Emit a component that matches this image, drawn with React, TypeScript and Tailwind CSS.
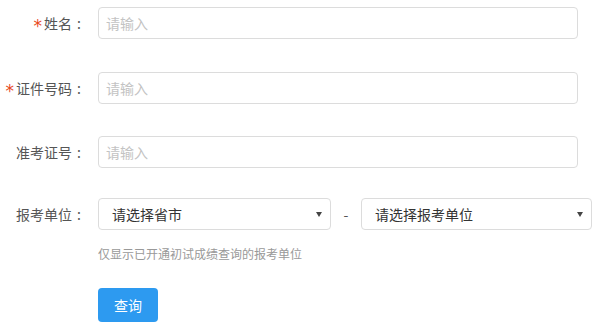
import React from 'react';

const font = { fontFamily: '"Microsoft YaHei", "Noto Sans CJK SC", "Noto Sans", sans-serif' };

function Label({ text, required }: { text: string; required?: boolean }) {
  return (
    <div className="flex w-[86px] shrink-0 items-center justify-end text-[14px] text-[#555]">
      {required && (
        <span className="mr-[2px] mt-[6px] text-[17px] leading-none text-[#e8491d]" style={{ fontFamily: '"DejaVu Sans", sans-serif' }}>
          *
        </span>
      )}
      {text}
      <span className="w-[14px] text-center">:</span>
    </div>
  );
}

function TextRow({ label, required, className }: { label: string; required?: boolean; className?: string }) {
  return (
    <div className={`flex items-center ${className ?? ''}`}>
      <Label text={label} required={required} />
      <input
        placeholder="请输入"
        className="ml-[12px] h-[32px] w-[480px] rounded-[4px] border border-[#dcdcdc] bg-white px-[7px] text-[14px] text-[#333] outline-none placeholder:text-[#c3c3c3]"
      />
    </div>
  );
}

function Select({ text, width }: { text: string; width: string }) {
  return (
    <div className={`relative flex h-[32px] items-center rounded-[4px] border border-[#dcdcdc] bg-white pl-[13px] text-[14px] text-[#333] ${width}`}>
      {text}
      <span className="absolute right-[8px] top-[13px] h-0 w-0 border-x-[3.5px] border-t-[5px] border-x-transparent border-t-[#444]" />
    </div>
  );
}

export default function App() {
  return (
    <div className="h-[326px] w-[598px] bg-white pt-[7px]" style={font}>
      <TextRow label="姓名" required />
      <TextRow label="证件号码" required className="mt-[33px]" />
      <TextRow label="准考证号" className="mt-[32px]" />
      <div className="mt-[30px] flex items-center">
        <Label text="报考单位" />
        <div className="ml-[12px] flex items-center">
          <Select text="请选择省市" width="w-[233px]" />
          <span className="w-[30px] text-center text-[14px] text-[#555]">-</span>
          <Select text="请选择报考单位" width="w-[231px]" />
        </div>
      </div>
      <div className="ml-[98px] mt-[15px] text-[12px] leading-[18px] text-[#999]">仅显示已开通初试成绩查询的报考单位</div>
      <button className="ml-[98px] mt-[25px] flex h-[34px] w-[60px] items-center justify-center rounded-[4px] bg-[#2d9af0] text-[14px] text-white">
        查询
      </button>
    </div>
  );
}
